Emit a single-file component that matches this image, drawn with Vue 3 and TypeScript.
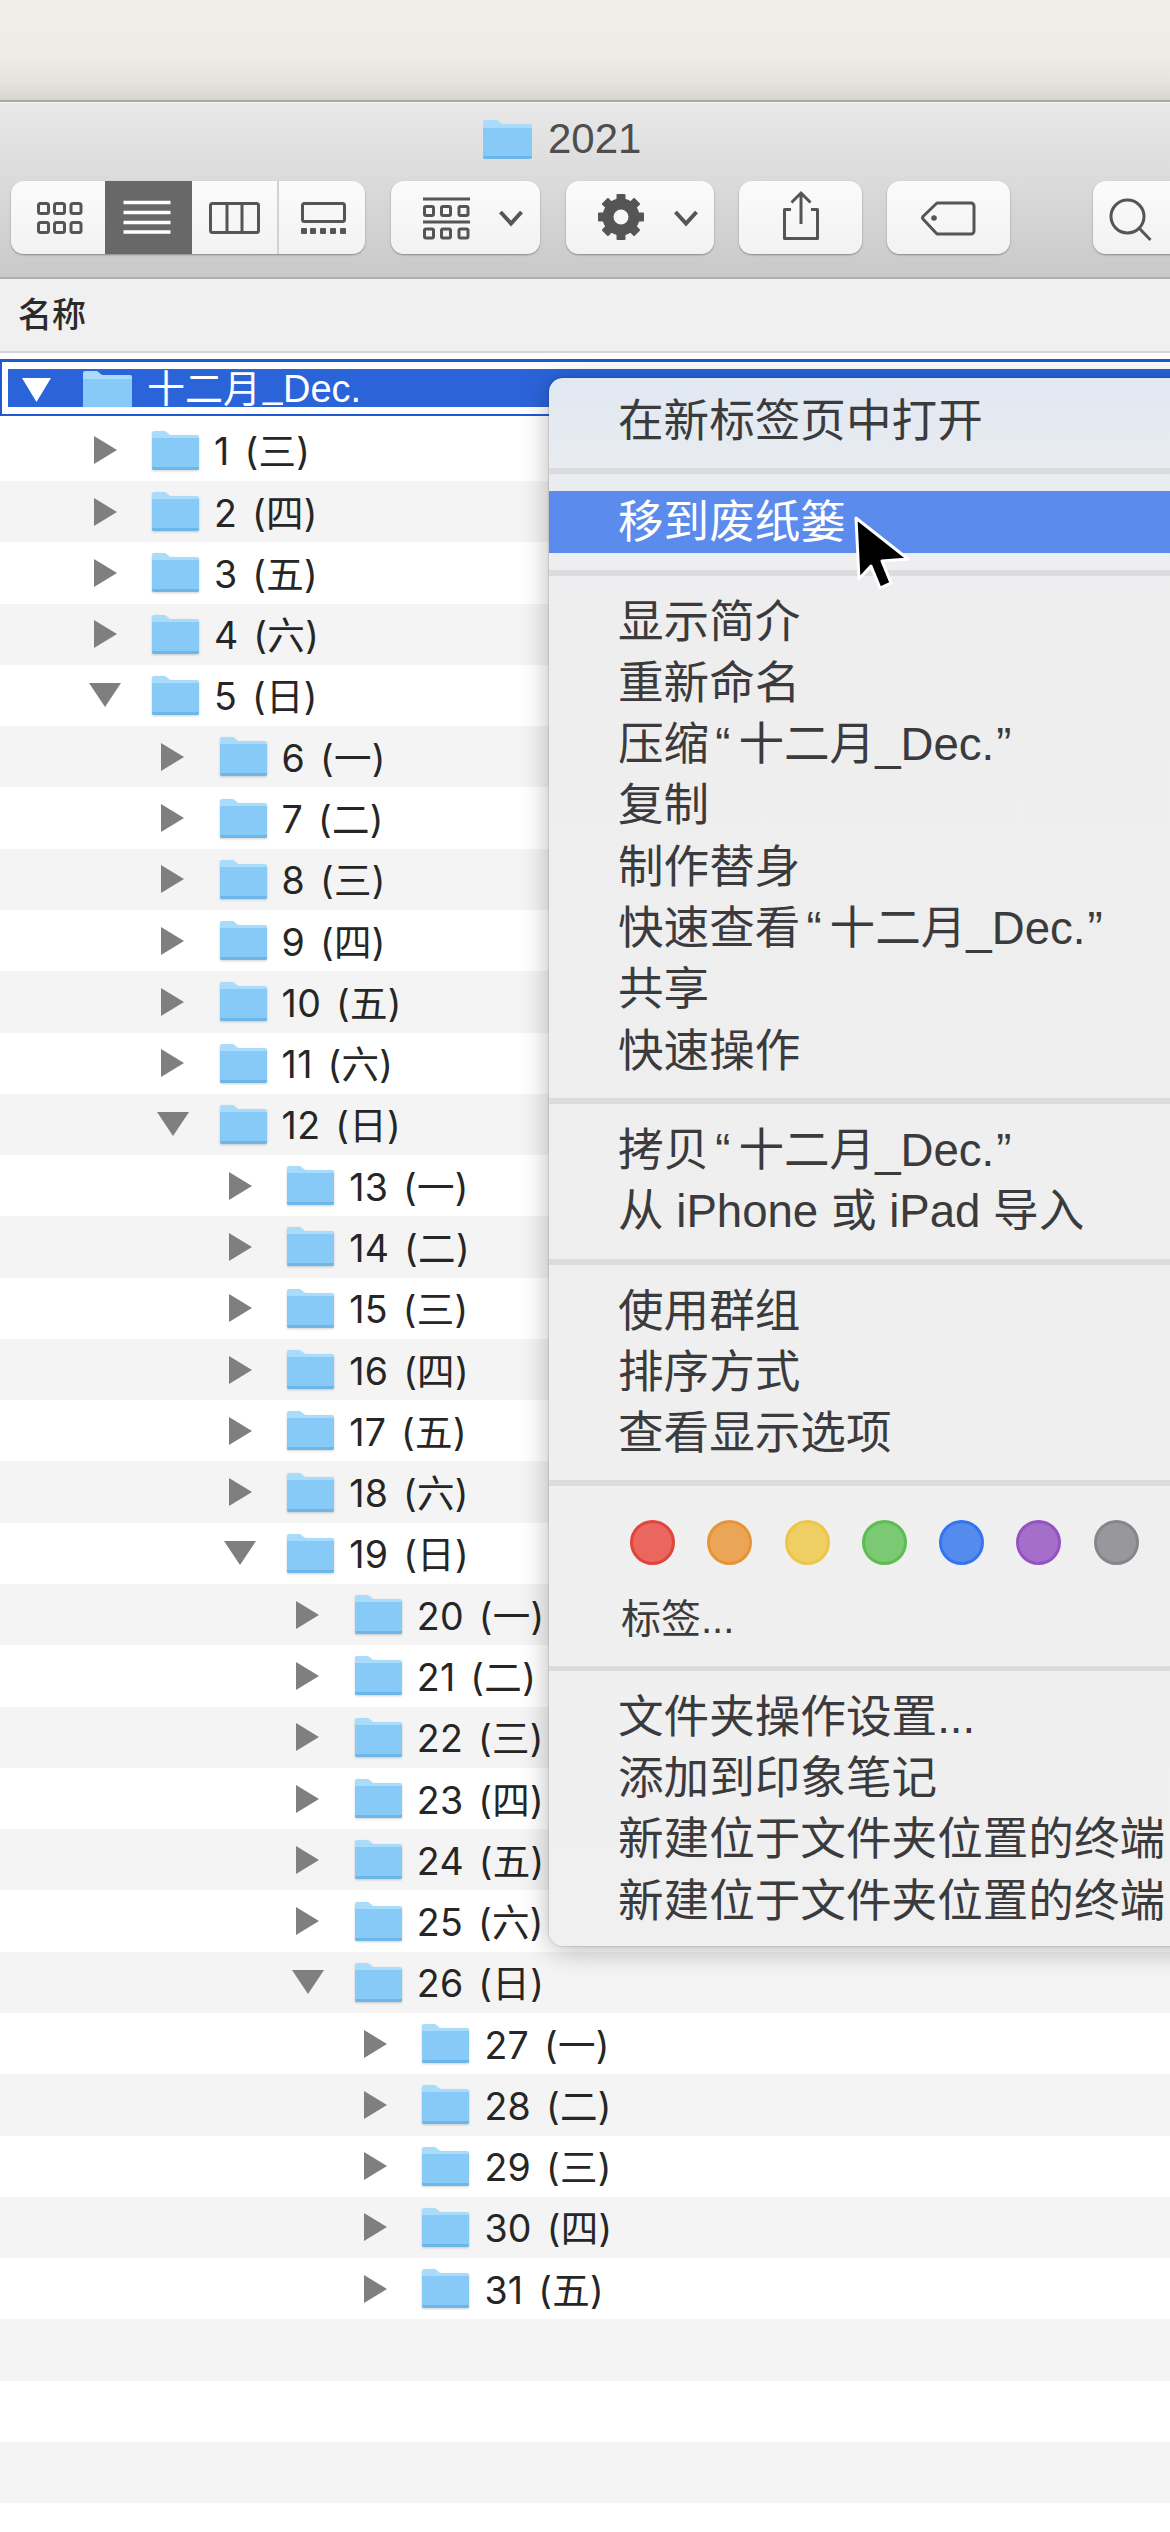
<script setup lang="ts">
interface Row {
  n: number
  wd: string
  level: number
  open: boolean
}
const wds = ['一', '二', '三', '四', '五', '六', '日']
const rows: Row[] = []
for (let n = 1; n <= 31; n++) {
  const wd = wds[(n + 1) % 7]
  let level = 1
  if (n >= 6 && n <= 12) level = 2
  if (n >= 13 && n <= 19) level = 3
  if (n >= 20 && n <= 26) level = 4
  if (n >= 27) level = 5
  rows.push({ n, wd, level, open: n === 5 || n === 12 || n === 19 || n === 26 })
}
const rowPad = (level: number) => `${93.5 + (level - 1) * 67.6}px`

const parts = (t: string) => t.split(/([“”])/).filter((p) => p !== '')

const groupA = ['显示简介', '重新命名', '压缩“十二月_Dec.”', '复制', '制作替身', '快速查看“十二月_Dec.”', '共享', '快速操作']
const groupB = ['拷贝“十二月_Dec.”', '从 iPhone 或 iPad 导入']
const groupC = ['使用群组', '排序方式', '查看显示选项']
const groupD = ['文件夹操作设置...', '添加到印象笔记', '新建位于文件夹位置的终端', '新建位于文件夹位置的终端']
const dots = [
  { fill: '#e9675f', line: '#e0443b' },
  { fill: '#eba557', line: '#e6943a' },
  { fill: '#efcf63', line: '#eec647' },
  { fill: '#7bc972', line: '#5cbd50' },
  { fill: '#568bee', line: '#3475ee' },
  { fill: '#a56fc9', line: '#9552c2' },
  { fill: '#98989c', line: '#85858a' },
]
</script>

<template>
  <div class="page">
    <div class="desk"></div>
    <div class="toolbar">
      <div class="title">
        <svg class="folder" viewBox="0 0 49 39">
          <path d="M2 0h12l5 4h28a2 2 0 0 1 2 2v31a2 2 0 0 1-2 2H2a2 2 0 0 1-2-2V2a2 2 0 0 1 2-2z" fill="#a9dcfa" />
          <path d="M0 8h49v29a2 2 0 0 1-2 2H2a2 2 0 0 1-2-2z" fill="#88caf7" />
          <path d="M0 36h49v1a2 2 0 0 1-2 2H2a2 2 0 0 1-2-2z" fill="#6cb6ea" />
        </svg>
        <span class="title-text">2021</span>
      </div>
      <div class="tools">
        <div class="btn seg">
          <div class="cell c1">
            <svg viewBox="0 0 94 73" width="94" height="73" fill="none" stroke="#555" stroke-width="3">
              <rect x="27.5" y="22.5" width="10" height="10" rx="2" /><rect x="43.5" y="22.5" width="10" height="10" rx="2" /><rect x="60" y="22.5" width="10" height="10" rx="2" />
              <rect x="27.5" y="41.5" width="10" height="10" rx="2" /><rect x="43.5" y="41.5" width="10" height="10" rx="2" /><rect x="60" y="41.5" width="10" height="10" rx="2" />
            </svg>
          </div>
          <div class="cell c2">
            <svg viewBox="0 0 87 73" width="87" height="73" stroke="#fff" stroke-width="3.4">
              <path d="M18.500 21.500h47M18.500 31.500h47M18.500 41.500h47M18.500 51h47" />
            </svg>
          </div>
          <div class="cell c3">
            <svg viewBox="0 0 85 73" width="85" height="73" fill="none" stroke="#555" stroke-width="3">
              <rect x="18.500" y="22.500" width="48" height="29" rx="2" /><path d="M35 22v30M50 22v30" />
            </svg>
          </div>
          <div class="cell c4">
            <svg viewBox="0 0 89 73" width="89" height="73" fill="none" stroke="#555" stroke-width="3">
              <rect x="23.500" y="22.500" width="42" height="18" rx="2" />
              <g fill="#555" stroke="none">
                <rect x="22" y="47" width="6" height="6" rx="1" /><rect x="31" y="47" width="6" height="6" rx="1" /><rect x="41" y="47" width="6" height="6" rx="1" /><rect x="51" y="47" width="6" height="6" rx="1" /><rect x="61" y="47" width="6" height="6" rx="1" />
              </g>
            </svg>
          </div>
        </div>
        <div class="btn b-arr">
          <svg viewBox="0 0 149 73" width="149" height="73" fill="none" stroke="#555" stroke-width="3">
            <path d="M32 18h47M32 41h47" />
            <rect x="33.500" y="25.500" width="9" height="9" rx="1.500" /><rect x="50.500" y="25.500" width="9" height="9" rx="1.500" /><rect x="68" y="25.500" width="9" height="9" rx="1.500" />
            <rect x="33.500" y="48" width="9" height="9" rx="1.500" /><rect x="50.500" y="48" width="9" height="9" rx="1.500" /><rect x="68" y="48" width="9" height="9" rx="1.500" />
            <path d="M109.500 31l10.500 11.500 10.500-11.500" stroke-width="4" />
          </svg>
        </div>
        <div class="btn b-act">
          <svg viewBox="0 0 148 73" width="148" height="73" fill="none">
            <g transform="translate(55 36)">
              <circle r="13" stroke="#555" stroke-width="11" />
              <g fill="#555">
                <rect x="-4.500" y="-23" width="9" height="9" rx="1" /><rect x="-4.500" y="14" width="9" height="9" rx="1" />
                <rect x="-4.500" y="-23" width="9" height="9" rx="1" transform="rotate(45)" /><rect x="-4.500" y="14" width="9" height="9" rx="1" transform="rotate(45)" />
                <rect x="-4.500" y="-23" width="9" height="9" rx="1" transform="rotate(90)" /><rect x="-4.500" y="14" width="9" height="9" rx="1" transform="rotate(90)" />
                <rect x="-4.500" y="-23" width="9" height="9" rx="1" transform="rotate(135)" /><rect x="-4.500" y="14" width="9" height="9" rx="1" transform="rotate(135)" />
              </g>
            </g>
            <path d="M109.500 31l10.500 11.500 10.500-11.500" stroke="#555" stroke-width="4" />
          </svg>
        </div>
        <div class="btn b-share">
          <svg viewBox="0 0 123 73" width="123" height="73" fill="none" stroke="#555" stroke-width="3">
            <path d="M52 28.500h-6.500v29h33v-29h-6.500" stroke-linejoin="round" />
            <path d="M62 12v31M52.500 21.500L62 12l9.500 9.500" />
          </svg>
        </div>
        <div class="btn b-tag">
          <svg viewBox="0 0 123 73" width="123" height="73" fill="none" stroke="#555" stroke-width="3">
            <path d="M50 22h34a3 3 0 0 1 3 3v25a3 3 0 0 1-3 3H50L36 38a2 2 0 0 1 0-2.500z" stroke-linejoin="round" />
            <circle cx="47" cy="37" r="2.800" fill="#555" stroke="none" />
          </svg>
        </div>
        <div class="btn b-search">
          <svg viewBox="0 0 76 73" width="76" height="73" fill="none" stroke="#555" stroke-width="3">
            <circle cx="34.500" cy="35.500" r="16.500" /><path d="M46.500 47.500l11 11.500" />
          </svg>
        </div>
      </div>
    </div>

    <div class="col-head"><span>名称</span></div>

    <div class="list">
      <div class="sel-ring">
        <div class="sel-row">
          <svg class="tri-down-w" viewBox="0 0 29 24" width="29" height="24"><path d="M0 0h29L14.500 24z" fill="#fff" /></svg>
          <svg class="folder" viewBox="0 0 49 39">
            <path d="M2 0h12l5 4h28a2 2 0 0 1 2 2v31a2 2 0 0 1-2 2H2a2 2 0 0 1-2-2V2a2 2 0 0 1 2-2z" fill="#a9dcfa" />
            <path d="M0 8h49v29a2 2 0 0 1-2 2H2a2 2 0 0 1-2-2z" fill="#88caf7" />
          </svg>
          <span class="sel-text">十二月<span class="us">_</span>Dec.</span>
        </div>
      </div>
      <div
        v-for="(r, i) in rows"
        :key="r.n"
        class="row"
        :class="{ alt: i % 2 === 1 }"
        :style="{ paddingLeft: rowPad(r.level) }"
      >
        <div class="tri-box">
          <svg v-if="r.open" class="tri-d" viewBox="0 0 32 24" width="32" height="24"><path d="M0 0h32L16 24z" fill="#7f7f7f" /></svg>
          <svg v-else viewBox="0 0 23 28" width="23" height="28"><path d="M0 0l23 14L0 28z" fill="#7f7f7f" /></svg>
        </div>
        <svg class="folder f-row" viewBox="0 0 47 39">
          <path d="M2 0h11l5 4h27a2 2 0 0 1 2 2v31a2 2 0 0 1-2 2H2a2 2 0 0 1-2-2V2a2 2 0 0 1 2-2z" fill="#a9dcfa" />
          <path d="M0 7h47v30a2 2 0 0 1-2 2H2a2 2 0 0 1-2-2z" fill="#88caf7" />
          <path d="M0 36h47v1a2 2 0 0 1-2 2H2a2 2 0 0 1-2-2z" fill="#6cb6ea" />
        </svg>
        <span class="row-text">{{ r.n }} ({{ r.wd }})</span>
      </div>
      <div class="row alt"></div>
      <div class="row"></div>
      <div class="row alt"></div>
      <div class="row"></div>
    </div>

    <div class="menu">
      <div class="item">在新标签页中打开</div>
      <div class="sep"></div>
      <div class="item hot">移到废纸篓</div>
      <div class="sep s2"></div>
      <div v-for="t in groupA" :key="t" class="item">
        <template v-for="(p, k) in parts(t)" :key="k">
          <span v-if="p === '“'" class="q-open">{{ p }}</span>
          <span v-else-if="p === '”'" class="q-close">{{ p }}</span>
          <template v-else>{{ p }}</template>
        </template>
      </div>
      <div class="sep s2"></div>
      <div v-for="t in groupB" :key="t" class="item">
        <template v-for="(p, k) in parts(t)" :key="k">
          <span v-if="p === '“'" class="q-open">{{ p }}</span>
          <span v-else-if="p === '”'" class="q-close">{{ p }}</span>
          <template v-else>{{ p }}</template>
        </template>
      </div>
      <div class="sep s2"></div>
      <div v-for="t in groupC" :key="t" class="item">{{ t }}</div>
      <div class="sep s3"></div>
      <div class="dots">
        <span
          v-for="d in dots"
          :key="d.fill"
          class="dot"
          :style="{ background: d.fill, borderColor: d.line }"
        ></span>
      </div>
      <div class="item small">标签...</div>
      <div class="sep s4"></div>
      <div v-for="(t, i) in groupD" :key="i" class="item">{{ t }}</div>
    </div>

    <svg class="cursor" viewBox="0 0 60 76" width="60" height="76">
      <path
        d="M4 3L7 64 19 51 28 73 39 68 30 46 56 44z"
        fill="#000"
        stroke="#fff"
        stroke-width="3"
        stroke-linejoin="round"
      />
    </svg>
  </div>
</template>

<style scoped>
.page {
  position: relative;
  width: 1170px;
  height: 2532px;
  overflow: hidden;
  background: #fff;
  font-family: "Liberation Sans", "Noto Sans CJK SC", sans-serif;
}
.desk {
  height: 100px;
  background: linear-gradient(180deg, #f1eeea 0%, #efece8 55%, #e7e4df 80%, #d8d5d0 100%);
  border-bottom: 2px solid #a9a8a6;
  box-sizing: content-box;
}
.toolbar {
  box-sizing: border-box;
  height: 177px;
  background: linear-gradient(180deg, #e9e9e9 0%, #c9c9c9 100%);
  border-top: 1px solid #f2f2f2;
  border-bottom: 2px solid #aeaeae;
  display: flex;
  flex-direction: column;
}
.title {
  display: flex;
  align-items: center;
  height: 72px;
  margin-bottom: 6px;
  padding-left: 483px;
  gap: 16px;
}
.title .folder {
  width: 49px;
  height: 39px;
}
.title-text {
  font-size: 42px;
  color: #4e4e4e;
}
.tools {
  display: flex;
  height: 73px;
  padding-left: 11px;
}
.btn {
  height: 73px;
  box-sizing: border-box;
  flex: none;
  border-radius: 13px;
  background: linear-gradient(180deg, #fbfbfb 0%, #f2f2f2 100%);
  box-shadow: 0 1px 2px rgba(0, 0, 0, 0.35);
  overflow: hidden;
}
.btn svg {
  display: block;
}
.seg {
  display: flex;
  width: 354px;
}
.cell {
  height: 73px;
  flex: none;
}
.c1 { width: 93.500px; }
.c2 { width: 87px; background: #686868; }
.c3 { width: 85px; border-right: 2px solid #d2d2d2; }
.c4 { width: 86px; }
.b-arr { width: 149px; margin-left: 26px; }
.b-act { width: 148px; margin-left: 26px; }
.b-share { width: 123px; margin-left: 25px; }
.b-tag { width: 123px; margin-left: 25px; }
.b-search { width: 120px; margin-left: 83px; }

.col-head {
  box-sizing: border-box;
  height: 74px;
  background: #f0f0f0;
  border-bottom: 2px solid #d4d4d4;
  display: flex;
  align-items: center;
  padding: 0 0 6px 18px;
  font-size: 34px;
  font-weight: 500;
  color: #2a2a2a;
}
.list {
  padding-top: 6px;
}
.sel-ring {
  box-sizing: border-box;
  height: 57px;
  margin-bottom: 3.700px;
  border-top: 3px solid #1f5ad2;
  border-bottom: 2px solid #1f5ad2;
  border-left: 2px solid #1f5ad2;
  padding: 7px 0 7px 6px;
  background: #fff;
}
.sel-row {
  height: 38px;
  overflow: hidden;
  background: #2b63d9;
  display: flex;
  align-items: flex-start;
  color: #fff;
}
.tri-down-w {
  flex: none;
  margin: 9px 32px 0 14px;
}
.sel-row .folder {
  flex: none;
  width: 49px;
  height: 39px;
  margin-top: 2px;
}
.sel-text {
  margin-left: 15px;
  font-size: 38px;
  line-height: 40px;
  white-space: nowrap;
}
.us {
  display: inline-block;
  width: 22px;
  height: 40px;
  vertical-align: top;
  overflow: hidden;
  line-height: 30px;
  padding-left: 2px;
  box-sizing: border-box;
}
.row {
  height: 61.290px;
  display: flex;
  align-items: center;
  background: #fff;
}
.row.alt {
  background: #f4f4f4;
}
.tri-box {
  width: 58.500px;
  flex: none;
  display: flex;
  align-items: center;
}
.tri-box svg {
  display: block;
}
.tri-d {
  margin-left: -4.500px;
}
.f-row {
  flex: none;
  width: 47px;
  height: 39px;
  filter: drop-shadow(0 1px 1px rgba(0, 0, 0, 0.18));
}
.row-text {
  margin-left: 15px;
  padding-bottom: 3px;
  font-family: Inter, "Noto Sans CJK SC", sans-serif;
  font-size: 37.500px;
  word-spacing: 4px;
  letter-spacing: 0.3px;
  color: #262626;
  white-space: nowrap;
}
.menu {
  position: absolute;
  left: 549px;
  top: 378px;
  width: 680px;
  height: 1568px;
  box-sizing: border-box;
  padding-top: 12px;
  border-radius: 14px;
  background: linear-gradient(180deg, #e1e8f2 0, #ebedf0 120px, #eeeeef 220px, #f0f0f0 100%);
  box-shadow: 0 4px 28px rgba(0, 0, 0, 0.28), 0 0 2px rgba(0, 0, 0, 0.35);
  color: #3b3b3d;
}
.item {
  height: 61.300px;
  line-height: 64px;
  padding-left: 69px;
  font-size: 45.600px;
  white-space: nowrap;
}
.item.hot {
  background: #5b8bec;
  color: #fff;
}
.item.small {
  font-size: 40px;
  padding-left: 72px;
}
.q-open {
  letter-spacing: 8px;
  margin-left: 6px;
}
.q-close {
  margin-left: 2px;
}
.sep {
  height: 6px;
  margin: 17px 0;
  background: #dcdcde;
}
.sep.s2 {
  margin: 17px 0 15px;
}
.sep.s3 {
  margin: 17px 0 34px;
}
.sep.s4 {
  margin: 17px 0 15px;
  height: 5px;
}
.dots {
  display: flex;
  gap: 32.300px;
  padding-left: 81px;
  margin-bottom: 22px;
}
.dot {
  box-sizing: border-box;
  width: 45px;
  height: 45px;
  border-radius: 50%;
  border: 3px solid;
  flex: none;
}
.cursor {
  position: absolute;
  left: 852px;
  top: 515px;
}
</style>
